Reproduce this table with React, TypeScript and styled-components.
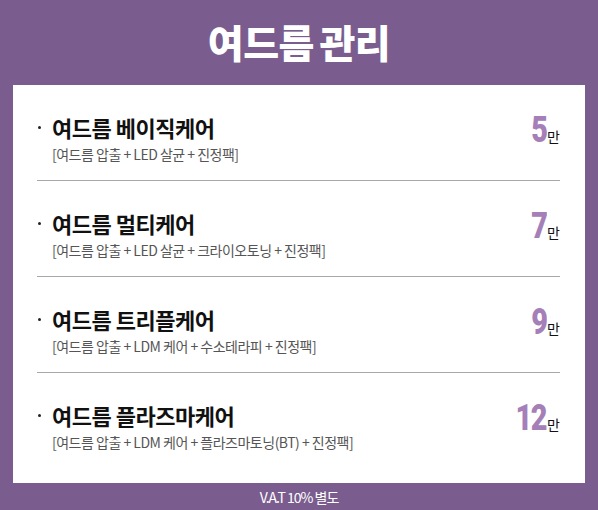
import React from 'react'
import styled, { createGlobalStyle } from 'styled-components'

const GlobalStyle = createGlobalStyle`
  html, body {
    margin: 0;
    padding: 0;
    background: #7a5d8e;
  }
  body {
    font-family: "Noto Sans CJK KR", "Noto Sans", sans-serif;
  }
`

const Page = styled.div`
  width: 598px;
  height: 510px;
  background: #7a5d8e;
  display: flex;
  flex-direction: column;
`

const Header = styled.h1`
  margin: 0;
  height: 85px;
  display: flex;
  align-items: center;
  justify-content: center;
  padding-bottom: 4px;
  box-sizing: border-box;
  color: #fff;
  font-size: 39px;
  font-weight: 900;
  letter-spacing: -0.5px;
  word-spacing: -3px;
`

const Panel = styled.ul`
  list-style: none;
  margin: 0 13px;
  padding: 0 25px 15px 24px;
  background: #fff;
`

const Row = styled.li`
  display: flex;
  justify-content: space-between;
  align-items: flex-start;
  padding: 30px 0 17px;
  border-bottom: 1px solid #a8a8a8;

  &:last-child {
    border-bottom: none;
  }
`

const Info = styled.div`
  display: flex;
  flex-direction: column;
`

const Title = styled.div`
  display: flex;
  align-items: center;
  height: 24px;
  font-size: 22px;
  font-weight: 700;
  color: #111;
  letter-spacing: -0.5px;

  &::before {
    content: '';
    width: 3px;
    height: 3px;
    border-radius: 50%;
    background: #222;
    margin: 1px 11px 0 1px;
  }
`

const Detail = styled.div`
  margin: 6px 0 0 15px;
  height: 18px;
  line-height: 18px;
  font-size: 14px;
  color: #555;
  letter-spacing: -0.5px;
`

const Price = styled.div`
  display: flex;
  align-items: baseline;
  margin-top: -5px;
`

const Amount = styled.span`
  display: inline-block;
  font-family: Roboto, "Noto Sans", sans-serif;
  font-size: 37px;
  font-weight: 900;
  line-height: 40px;
  color: #a580b8;
  letter-spacing: -2px;
  transform: scaleX(0.78);
  transform-origin: right center;
  margin-right: 1px;
`

const Unit = styled.span`
  font-size: 14px;
  color: #111;
`

const Footer = styled.div`
  flex: 1;
  display: flex;
  align-items: center;
  justify-content: center;
  color: #fff;
  font-size: 14px;
  letter-spacing: -1px;
`

const items = [
  { title: '여드름 베이직케어', detail: '[여드름 압출 + LED 살균 + 진정팩]', price: '5' },
  { title: '여드름 멀티케어', detail: '[여드름 압출 + LED 살균 + 크라이오토닝 + 진정팩]', price: '7' },
  { title: '여드름 트리플케어', detail: '[여드름 압출 + LDM 케어 + 수소테라피 + 진정팩]', price: '9' },
  { title: '여드름 플라즈마케어', detail: '[여드름 압출 + LDM 케어 + 플라즈마토닝(BT) + 진정팩]', price: '12' },
]

export default function App() {
  return (
    <Page>
      <GlobalStyle />
      <Header>여드름 관리</Header>
      <Panel>
        {items.map((item) => (
          <Row key={item.title}>
            <Info>
              <Title>{item.title}</Title>
              <Detail>{item.detail}</Detail>
            </Info>
            <Price>
              <Amount>{item.price}</Amount>
              <Unit>만</Unit>
            </Price>
          </Row>
        ))}
      </Panel>
      <Footer>V.A.T 10% 별도</Footer>
    </Page>
  )
}
